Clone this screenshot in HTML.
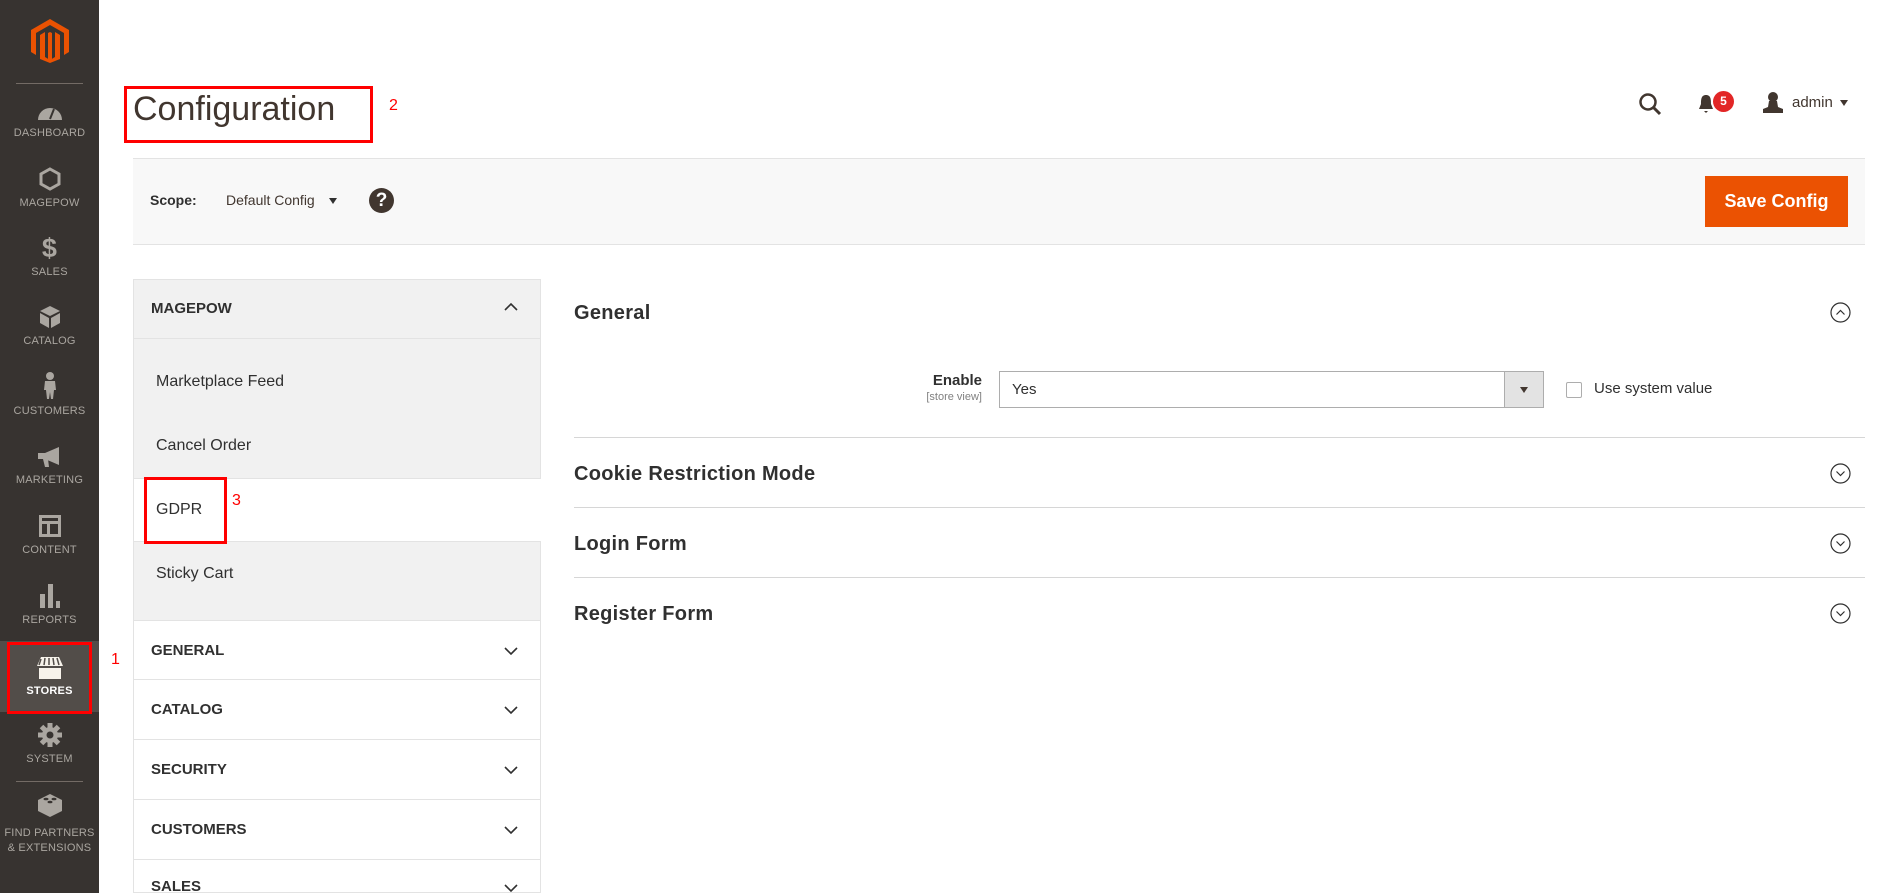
<!DOCTYPE html>
<html><head><meta charset="utf-8"><style>
*{box-sizing:border-box;margin:0;padding:0}
body{width:1899px;height:893px;overflow:hidden;background:#fff;font-family:"Liberation Sans",sans-serif;color:#303030;position:relative}
.abs{position:absolute}
#side{left:0;top:0;width:99px;height:893px;background:#373330}
.mi{position:absolute;left:0;width:99px;text-align:center;color:#aaa6a0;font-size:11px;letter-spacing:.2px}
.mi svg{display:block;margin:0 auto 6px}
.red{position:absolute;border:3px solid #f00}
.rn{position:absolute;color:#f00;font-size:16px}
.nav{position:absolute;left:133px;width:408px;border:1px solid #e3e3e3;border-top:none;background:#fff;font-weight:bold;font-size:15px;color:#303030}
.sec{position:absolute;left:574px;width:1291px;font-size:20px;font-weight:bold;color:#303030;letter-spacing:.3px}
.hr{position:absolute;left:574px;width:1291px;height:1px;background:#d6d6d6}
</style></head><body>
<div id="side" class="abs">
 <svg class="abs" style="left:31px;top:19px" width="38" height="44" viewBox="0 0 38 44"><path d="M19 0L38 11V33L33 36V14L19 6L5 14V36L0 33V11Z M9 16L14 13V38L19 41L24 38V13L29 16V40L19 44L9 40Z" fill="#eb5202"/><path d="M17 14V42L19 43L21 42V14L19 13Z" fill="#eb5202"/></svg>
 <div class="abs" style="left:16px;top:83px;width:67px;height:1px;background:#736b65"></div>
 <div class="mi" style="top:101px"><svg width="26" height="20" viewBox="0 0 26 20"><path d="M1 19A12 12 0 0 1 25 19Z" fill="#aaa6a0"/><path d="M13 18L17 8" stroke="#373330" stroke-width="2"/></svg>DASHBOARD</div>
 <div class="mi" style="top:167px"><svg width="22" height="24" viewBox="0 0 22 24"><path d="M11 2L20 7V17L11 22L2 17V7Z" fill="none" stroke="#aaa6a0" stroke-width="3"/></svg>MAGEPOW</div>
 <div class="mi" style="top:236px"><div style="font-size:27px;font-weight:bold;line-height:24px;margin-bottom:6px">$</div>SALES</div>
 <div class="mi" style="top:305px"><svg width="22" height="24" viewBox="0 0 22 24"><path d="M11 1L21 6L11 11L1 6Z M1 8L10 13V23L1 18Z M12 13L21 8V18L12 23Z" fill="#aaa6a0"/></svg>CATALOG</div>
 <div class="mi" style="top:372px"><svg width="14" height="27" viewBox="0 0 14 27"><circle cx="7" cy="4" r="4" fill="#aaa6a0"/><path d="M2 9H12L13 18H11L10 27H8L7 20L6 27H4L3 18H1Z" fill="#aaa6a0"/></svg>CUSTOMERS</div>
 <div class="mi" style="top:446px"><svg width="26" height="22" viewBox="0 0 26 22"><path d="M1 7H8L22 1V19L8 13H1Z M6 13H11L12 21H8Z" fill="#aaa6a0"/></svg>MARKETING</div>
 <div class="mi" style="top:514px"><svg width="24" height="24" viewBox="0 0 24 24"><path d="M1 1H23V23H1Z M4 4V7H20V4Z M4 10V20H9V10Z M12 10V20H20V10Z" fill="#aaa6a0" fill-rule="evenodd"/></svg>CONTENT</div>
 <div class="mi" style="top:584px"><svg width="22" height="24" viewBox="0 0 22 24"><rect x="1" y="10" width="5" height="14" fill="#aaa6a0"/><rect x="9" y="0" width="5" height="24" fill="#aaa6a0"/><rect x="17" y="17" width="4" height="7" fill="#aaa6a0"/></svg>REPORTS</div>
 <div class="abs" style="left:0;top:641px;width:99px;height:71px;background:#524d49"></div>
 <div class="mi" style="top:657px;color:#fff;font-weight:bold"><svg width="28" height="22" viewBox="0 0 28 22"><path d="M5 0H23L27 9H1Z M3 11H25V22H3Z" fill="#f7f3eb"/><path d="M9 1L8 8 M13 1V8 M17 1L18 8 M21 1L23 8 M5 2L3 8" stroke="#524d49" stroke-width="1.5"/></svg>STORES</div>
 <div class="mi" style="top:723px"><svg width="24" height="24" viewBox="0 0 24 24"><circle cx="12" cy="12" r="8" fill="#aaa6a0"/><g stroke="#aaa6a0" stroke-width="5"><path d="M12 0V24M0 12H24M3.5 3.5L20.5 20.5M20.5 3.5L3.5 20.5"/></g><circle cx="12" cy="12" r="3.5" fill="#373330"/></svg>SYSTEM</div>
 <div class="abs" style="left:16px;top:781px;width:67px;height:1px;background:#736b65"></div>
 <div class="mi" style="top:792px;line-height:15px"><svg width="26" height="26" viewBox="0 0 26 26" style="margin-bottom:8px"><path d="M13 2L25 8V19L13 25L1 19V8Z" fill="#aaa6a0"/><g fill="#373330"><ellipse cx="9" cy="7" rx="2.5" ry="1.3"/><ellipse cx="17" cy="7" rx="2.5" ry="1.3"/><ellipse cx="13" cy="10" rx="2.5" ry="1.3"/></g></svg>FIND PARTNERS<br>&amp; EXTENSIONS</div>
</div>
<div class="red" style="left:7px;top:642px;width:85px;height:72px"></div>
<div class="rn" style="left:111px;top:651px">1</div>

<div class="abs" style="left:133px;top:87px;font-size:34px;color:#41362f;line-height:44px">Configuration</div>
<div class="red" style="left:124px;top:86px;width:249px;height:57px"></div>
<div class="rn" style="left:389px;top:97px">2</div>

<svg class="abs" style="left:1638px;top:92px" width="24" height="24" viewBox="0 0 24 24"><circle cx="10" cy="10" r="7.5" fill="none" stroke="#41362f" stroke-width="2.5"/><path d="M15.5 15.5L22 22" stroke="#41362f" stroke-width="3"/></svg>
<svg class="abs" style="left:1698px;top:94px" width="16" height="20" viewBox="0 0 16 20"><path d="M8 1C3 1 3 6 3 10L1 15H15L13 10C13 6 13 1 8 1Z M6 17H10L8 19Z" fill="#41362f"/></svg>
<div class="abs" style="left:1713px;top:91px;width:21px;height:21px;border-radius:50%;background:#e22626;color:#fff;font-size:12px;font-weight:bold;text-align:center;line-height:21px">5</div>
<svg class="abs" style="left:1762px;top:91px" width="22" height="24" viewBox="0 0 22 24"><circle cx="11" cy="6" r="5" fill="#41362f"/><path d="M7 10H15L16 16L21 18V22H1V18L6 16Z" fill="#41362f"/></svg>
<div class="abs" style="left:1792px;top:94px;font-size:15px;color:#41362f">admin</div>
<div class="abs" style="left:1840px;top:100px;width:0;height:0;border-left:4.5px solid transparent;border-right:4.5px solid transparent;border-top:6px solid #41362f"></div>

<div class="abs" style="left:133px;top:158px;width:1732px;height:87px;background:#f8f8f8;border-top:1px solid #e3e3e3;border-bottom:1px solid #e3e3e3"></div>
<div class="abs" style="left:150px;top:192px;font-size:14px;font-weight:bold;color:#303030">Scope:</div>
<div class="abs" style="left:226px;top:192px;font-size:14px;color:#41362f">Default Config</div>
<div class="abs" style="left:329px;top:198px;border-left:4.5px solid transparent;border-right:4.5px solid transparent;border-top:6px solid #303030"></div>
<div class="abs" style="left:369px;top:188px;width:25px;height:25px;border-radius:50%;background:#41362f;color:#fff;font-weight:bold;font-size:19px;text-align:center;line-height:25px">?</div>
<div class="abs" style="left:1705px;top:176px;width:143px;height:51px;background:#eb5202;color:#fff;font-size:18px;font-weight:bold;text-align:center;line-height:51px">Save Config</div>

<div class="abs" style="left:133px;top:279px;width:408px;height:342px;background:#f1f1f1;border:1px solid #e3e3e3"></div>
<div class="abs" style="left:134px;top:338px;width:406px;height:1px;background:#e3e3e3"></div>
<div class="abs" style="left:151px;top:300px;font-size:15px;font-weight:bold;color:#303030">MAGEPOW</div>
<svg class="abs" style="left:504px;top:302px" width="14" height="9" viewBox="0 0 14 9"><path d="M1 8L7 2L13 8" fill="none" stroke="#303030" stroke-width="1.6"/></svg>
<div class="abs" style="left:156px;top:373px;font-size:16px;color:#303030">Marketplace Feed</div>
<div class="abs" style="left:156px;top:437px;font-size:16px;color:#303030">Cancel Order</div>
<div class="abs" style="left:134px;top:478px;width:407px;height:64px;background:#fff;border-top:1px solid #e3e3e3;border-bottom:1px solid #e3e3e3"></div>
<div class="abs" style="left:156px;top:501px;font-size:16px;color:#303030">GDPR</div>
<div class="red" style="left:144px;top:477px;width:83px;height:67px"></div>
<div class="rn" style="left:232px;top:492px">3</div>
<div class="abs" style="left:156px;top:565px;font-size:16px;color:#303030">Sticky Cart</div>

<div class="nav" style="top:620px;height:273px;border-top:1px solid #e3e3e3"></div>
<div class="abs" style="left:151px;top:642px;font-size:15px;font-weight:bold">GENERAL</div>
<div class="abs" style="left:134px;top:679px;width:406px;height:1px;background:#e3e3e3"></div>
<div class="abs" style="left:151px;top:701px;font-size:15px;font-weight:bold">CATALOG</div>
<div class="abs" style="left:134px;top:739px;width:406px;height:1px;background:#e3e3e3"></div>
<div class="abs" style="left:151px;top:761px;font-size:15px;font-weight:bold">SECURITY</div>
<div class="abs" style="left:134px;top:799px;width:406px;height:1px;background:#e3e3e3"></div>
<div class="abs" style="left:151px;top:821px;font-size:15px;font-weight:bold">CUSTOMERS</div>
<div class="abs" style="left:134px;top:859px;width:406px;height:1px;background:#e3e3e3"></div>
<div class="abs" style="left:151px;top:878px;font-size:15px;font-weight:bold">SALES</div>
<svg class="abs" style="left:504px;top:647px" width="14" height="9" viewBox="0 0 14 9"><path d="M1 1L7 7L13 1" fill="none" stroke="#303030" stroke-width="1.6"/></svg>
<svg class="abs" style="left:504px;top:706px" width="14" height="9" viewBox="0 0 14 9"><path d="M1 1L7 7L13 1" fill="none" stroke="#303030" stroke-width="1.6"/></svg>
<svg class="abs" style="left:504px;top:766px" width="14" height="9" viewBox="0 0 14 9"><path d="M1 1L7 7L13 1" fill="none" stroke="#303030" stroke-width="1.6"/></svg>
<svg class="abs" style="left:504px;top:826px" width="14" height="9" viewBox="0 0 14 9"><path d="M1 1L7 7L13 1" fill="none" stroke="#303030" stroke-width="1.6"/></svg>
<svg class="abs" style="left:504px;top:884px" width="14" height="9" viewBox="0 0 14 9"><path d="M1 1L7 7L13 1" fill="none" stroke="#303030" stroke-width="1.6"/></svg>

<div class="sec" style="top:302px">General</div>
<svg class="abs" style="left:1830px;top:302px" width="21" height="21" viewBox="0 0 21 21"><circle cx="10.5" cy="10.5" r="9.5" fill="none" stroke="#303030" stroke-width="1.2"/><path d="M6.5 12.5L10.5 8.5L14.5 12.5" fill="none" stroke="#303030" stroke-width="1.2"/></svg>
<div class="abs" style="left:880px;top:372px;width:102px;text-align:right;font-size:15px;font-weight:bold;color:#303030">Enable</div>
<div class="abs" style="left:880px;top:391px;width:102px;text-align:right;font-size:11px;color:#808080">[store view]</div>
<div class="abs" style="left:999px;top:371px;width:545px;height:37px;border:1px solid #adadad;background:#fff"></div>
<div class="abs" style="left:1504px;top:372px;width:39px;height:35px;background:#e3e3e3;border-left:1px solid #adadad"></div>
<div class="abs" style="left:1520px;top:387px;border-left:4px solid transparent;border-right:4px solid transparent;border-top:6px solid #41362f"></div>
<div class="abs" style="left:1012px;top:381px;font-size:15px;color:#303030">Yes</div>
<div class="abs" style="left:1566px;top:382px;width:16px;height:16px;border:1px solid #adadad;border-radius:2px"></div>
<div class="abs" style="left:1594px;top:380px;font-size:15px;color:#303030">Use system value</div>
<div class="hr" style="top:437px"></div>
<div class="sec" style="top:463px">Cookie Restriction Mode</div>
<div class="hr" style="top:507px"></div>
<div class="sec" style="top:533px">Login Form</div>
<div class="hr" style="top:577px"></div>
<div class="sec" style="top:603px">Register Form</div>
<svg class="abs" style="left:1830px;top:463px" width="21" height="21" viewBox="0 0 21 21"><circle cx="10.5" cy="10.5" r="9.5" fill="none" stroke="#303030" stroke-width="1.2"/><path d="M6.5 8.5L10.5 12.5L14.5 8.5" fill="none" stroke="#303030" stroke-width="1.2"/></svg>
<svg class="abs" style="left:1830px;top:533px" width="21" height="21" viewBox="0 0 21 21"><circle cx="10.5" cy="10.5" r="9.5" fill="none" stroke="#303030" stroke-width="1.2"/><path d="M6.5 8.5L10.5 12.5L14.5 8.5" fill="none" stroke="#303030" stroke-width="1.2"/></svg>
<svg class="abs" style="left:1830px;top:603px" width="21" height="21" viewBox="0 0 21 21"><circle cx="10.5" cy="10.5" r="9.5" fill="none" stroke="#303030" stroke-width="1.2"/><path d="M6.5 8.5L10.5 12.5L14.5 8.5" fill="none" stroke="#303030" stroke-width="1.2"/></svg>
</body></html>
